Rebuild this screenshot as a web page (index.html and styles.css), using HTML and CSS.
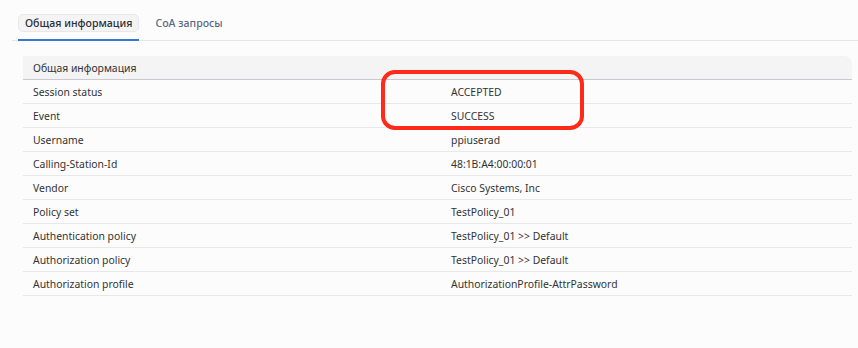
FILE: index.html
```html
<!DOCTYPE html>
<html lang="ru">
<head>
<meta charset="utf-8">
<link rel="stylesheet" href="styles.css">
</head>
<body>
<div class="page">
  <div class="tabs">
    <div class="tab active"><span class="pill">Общая информация</span></div>
    <div class="tab"><span class="plain">CoA запросы</span></div>
  </div>
  <div class="table">
    <div class="row head"><div class="cell">Общая информация</div><div class="cell"></div></div>
    <div class="row"><div class="cell">Session status</div><div class="cell">ACCEPTED</div></div>
    <div class="row"><div class="cell">Event</div><div class="cell">SUCCESS</div></div>
    <div class="row"><div class="cell">Username</div><div class="cell">ppiuserad</div></div>
    <div class="row"><div class="cell">Calling-Station-Id</div><div class="cell">48:1B:A4:00:00:01</div></div>
    <div class="row"><div class="cell">Vendor</div><div class="cell">Cisco Systems, Inc</div></div>
    <div class="row"><div class="cell">Policy set</div><div class="cell">TestPolicy_01</div></div>
    <div class="row"><div class="cell">Authentication policy</div><div class="cell">TestPolicy_01 &gt;&gt; Default</div></div>
    <div class="row"><div class="cell">Authorization policy</div><div class="cell">TestPolicy_01 &gt;&gt; Default</div></div>
    <div class="row"><div class="cell">Authorization profile</div><div class="cell">AuthorizationProfile-AttrPassword</div></div>
    <div class="mark"></div>
  </div>
</div>
</body>
</html>
```

FILE: styles.css
```css
html, body {
  margin: 0;
  padding: 0;
  background: #fcfcfc;
}
body {
  font-family: "Noto Sans", "Open Sans", sans-serif;
  color: #333;
  font-size: 10.4px;
}
.page {
  padding: 14px 0 0 12px;
}
.tabs {
  display: flex;
  border-bottom: 1px solid #e6e6e8;
  height: 26px;
  gap: 16px;
  padding-left: 6px;
}
.tab {
  display: flex;
  align-items: flex-start;
}
.tab.active {
  border-bottom: 2px solid #3577d4;
  margin-bottom: -1px;
}
.pill {
  display: block;
  height: 16px;
  line-height: 16px;
  padding: 0 6px;
  border: 1px solid #e8e8ea;
  border-radius: 5px;
  background: #f4f4f5;
  font-weight: 500;
  color: #2b2f36;
  font-size: 10.6px;
}
.plain {
  display: block;
  line-height: 18px;
  font-weight: 500;
  color: #5d6a80;
  font-size: 10.6px;
}
.table {
  position: relative;
  margin: 15px 6px 0 11px;
}
.row {
  display: grid;
  grid-template-columns: 428px 1fr;
  height: 23px;
  border-bottom: 1px solid #e8e8e8;
  align-items: center;
}
.row.head {
  background: #f4f4f4;
  border-bottom: 1px solid #c9c9cf;
  border-radius: 0 8px 0 0;
}
.cell {
  padding-left: 10px;
  white-space: nowrap;
}
.row .cell:nth-child(2) {
  padding-left: 0;
}
.mark {
  position: absolute;
  left: 358px;
  top: 14px;
  width: 195px;
  height: 52px;
  border: 4px solid #ff2a1a;
  border-radius: 14px;
}
```
